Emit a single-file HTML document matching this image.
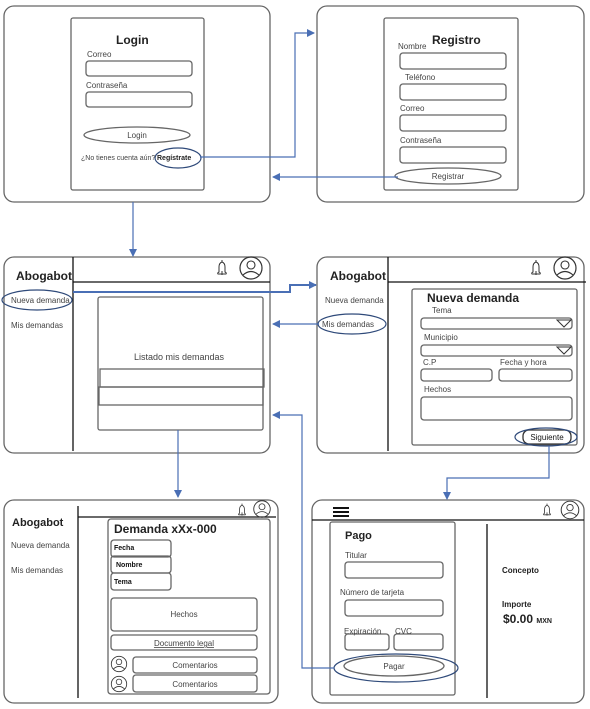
<!DOCTYPE html>
<html><head><meta charset="utf-8"><style>
html,body{margin:0;padding:0;background:#fff;}
svg{display:block;font-family:"Liberation Sans",sans-serif;}
</style></head><body>
<svg width="590" height="709" viewBox="0 0 590 709" xmlns="http://www.w3.org/2000/svg">
<defs>
<marker id="ah" markerWidth="8" markerHeight="8" refX="7" refY="4" orient="auto" markerUnits="userSpaceOnUse"><path d="M0,0 L8,4 L0,8 z" fill="#4a6fb5"/></marker>
<g id="bell"><path d="M-3,4 L-3,-1 Q-3,-5 0,-6 Q3,-5 3,-1 L3,4 Q5,5 4,6 L-4,6 Q-5,5 -3,4 z" fill="none" stroke="#333" stroke-width="1"/><line x1="0" y1="-6" x2="0" y2="-8" stroke="#333"/><line x1="0" y1="3" x2="0" y2="7" stroke="#333"/></g>
<g id="user"><circle r="11" fill="none" stroke="#333" stroke-width="1.2"/><circle cy="-3" r="4" fill="none" stroke="#333" stroke-width="1.1"/><path d="M-8,7 Q0,0 8,7" fill="none" stroke="#333" stroke-width="1.1"/></g>
</defs>
<g fill="none" stroke="#666" stroke-width="1.3">
<!-- panel 1 -->
<rect x="4" y="6" width="266" height="196" rx="10"/>
<rect x="71" y="18" width="133" height="172" rx="2"/>
<rect x="86" y="61" width="106" height="15" rx="3"/>
<rect x="86" y="92" width="106" height="15" rx="3"/>
<ellipse cx="137" cy="135" rx="53" ry="8"/>
<!-- panel 2 -->
<rect x="317" y="6" width="267" height="196" rx="10"/>
<rect x="384" y="18" width="134" height="172" rx="2"/>
<rect x="400" y="53" width="106" height="16" rx="3"/>
<rect x="400" y="84" width="106" height="16" rx="3"/>
<rect x="400" y="115" width="106" height="16" rx="3"/>
<rect x="400" y="147" width="106" height="16" rx="3"/>
<ellipse cx="448" cy="176" rx="53" ry="8"/>
<!-- panel 3 -->
<rect x="4" y="257" width="266" height="196" rx="10"/>
<rect x="98" y="297" width="165" height="133" rx="2"/>
<rect x="100" y="369" width="164" height="18"/>
<rect x="99" y="387" width="164" height="18"/>
<!-- panel 4 -->
<rect x="317" y="257" width="267" height="196" rx="10"/>
<rect x="412" y="289" width="165" height="156" rx="2"/>
<rect x="421" y="318" width="151" height="11" rx="3"/>
<rect x="421" y="345" width="151" height="11" rx="3"/>
<rect x="421" y="369" width="71" height="12" rx="3"/>
<rect x="499" y="369" width="73" height="12" rx="3"/>
<rect x="421" y="397" width="151" height="23" rx="3"/>
<rect x="523" y="430" width="48" height="14" rx="6" stroke="#333"/>
<!-- panel 5 -->
<rect x="4" y="500" width="274" height="203" rx="10"/>
<rect x="108" y="519" width="162" height="175" rx="3"/>
<rect x="111" y="540" width="60" height="17" rx="3"/>
<rect x="111" y="556" width="60" height="17" rx="3"/>
<rect x="111" y="573" width="60" height="17" rx="3"/>
<rect x="111" y="598" width="146" height="33" rx="3"/>
<rect x="111" y="635" width="146" height="15" rx="3"/>
<rect x="133" y="657" width="124" height="16" rx="3"/>
<rect x="133" y="675" width="124" height="17" rx="3"/>
<!-- panel 6 -->
<rect x="312" y="500" width="272" height="203" rx="10"/>
<rect x="330" y="522" width="125" height="173" rx="2"/>
<rect x="345" y="562" width="98" height="16" rx="3"/>
<rect x="345" y="600" width="98" height="16" rx="3"/>
<rect x="345" y="634" width="44" height="16" rx="3"/>
<rect x="394" y="634" width="49" height="16" rx="3"/>
<ellipse cx="394" cy="666" rx="50" ry="10"/>
</g>
<!-- dividers -->
<g stroke="#111" stroke-width="1.3">
<line x1="73" y1="257" x2="73" y2="451"/><line x1="73" y1="282" x2="270" y2="282"/>
<line x1="388" y1="257" x2="388" y2="451"/><line x1="388" y1="282" x2="586" y2="282"/>
<line x1="78" y1="506" x2="78" y2="698"/><line x1="78" y1="517" x2="276" y2="517"/>
<line x1="312" y1="520" x2="584" y2="520"/><line x1="487" y1="524" x2="487" y2="698"/>
<line x1="333" y1="508" x2="349" y2="508" stroke-width="2"/><line x1="333" y1="512" x2="349" y2="512" stroke-width="2"/><line x1="333" y1="516" x2="349" y2="516" stroke-width="2"/>
</g>
<!-- dropdown triangles -->
<path d="M557,320 L571,320 L564,327 z" fill="none" stroke="#333"/>
<path d="M557,347 L571,347 L564,354 z" fill="none" stroke="#333"/>
<!-- icons -->
<use href="#bell" x="222" y="268"/><use href="#user" x="251" y="268"/>
<use href="#bell" x="536" y="268"/><use href="#user" x="565" y="268"/>
<use href="#bell" transform="translate(242,510) scale(0.8)"/><use href="#user" transform="translate(262,509) scale(0.75)"/>
<use href="#bell" transform="translate(547,510) scale(0.8)"/><use href="#user" transform="translate(570,510) scale(0.8)"/>
<use href="#user" transform="translate(119,664) scale(0.7)"/><use href="#user" transform="translate(119,684) scale(0.7)"/>
<!-- blue ellipses -->
<g fill="none" stroke="#2f4a7a" stroke-width="1.2">
<ellipse cx="178" cy="158" rx="23" ry="10"/>
<ellipse cx="37" cy="300" rx="35" ry="10"/>
<ellipse cx="352" cy="324" rx="34" ry="10"/>
<ellipse cx="546" cy="437" rx="31" ry="9"/>
<ellipse cx="396" cy="668" rx="62" ry="14"/>
</g>
<!-- connectors -->
<g fill="none" stroke="#4a6fb5" stroke-width="1.2">
<polyline points="200,157 295,157 295,33 314,33" marker-end="url(#ah)"/>
<polyline points="398,177 273,177" marker-end="url(#ah)"/>
<polyline points="133,202 133,256" marker-end="url(#ah)"/>
<polyline points="73,292 290,292 290,285 316,285" stroke-width="2" marker-end="url(#ah)"/>
<polyline points="319,324 273,324" marker-end="url(#ah)"/>
<polyline points="178,430 178,497" marker-end="url(#ah)"/>
<polyline points="549,446 549,478 447,478 447,499" marker-end="url(#ah)"/>
<polyline points="334,668 302,668 302,415 273,415" marker-end="url(#ah)"/>
</g>
<!-- text -->
<g fill="#444" font-size="8">
<text x="116" y="44" font-size="12" font-weight="bold" fill="#222">Login</text>
<text x="87" y="57">Correo</text>
<text x="86" y="88">Contraseña</text>
<text x="137" y="138" text-anchor="middle">Login</text>
<text x="81" y="160" font-size="7">¿No tienes cuenta aún?</text>
<text x="157" y="160" font-size="7" font-weight="bold" fill="#222">Regístrate</text>
<text x="432" y="44" font-size="12" font-weight="bold" fill="#222">Registro</text>
<text x="398" y="49">Nombre</text>
<text x="405" y="80">Teléfono</text>
<text x="400" y="111">Correo</text>
<text x="400" y="143">Contraseña</text>
<text x="448" y="179" text-anchor="middle">Registrar</text>
<text x="16" y="280" font-size="12" font-weight="bold" fill="#222">Abogabot</text>
<text x="11" y="303">Nueva demanda</text>
<text x="11" y="328">Mis demandas</text>
<text x="179" y="360" text-anchor="middle" font-size="9">Listado mis demandas</text>
<text x="330" y="280" font-size="12" font-weight="bold" fill="#222">Abogabot</text>
<text x="325" y="303">Nueva demanda</text>
<text x="322" y="327">Mis demandas</text>
<text x="427" y="302" font-size="12" font-weight="bold" fill="#222">Nueva demanda</text>
<text x="432" y="313">Tema</text>
<text x="424" y="340">Municipio</text>
<text x="423" y="365">C.P</text>
<text x="500" y="365">Fecha y hora</text>
<text x="424" y="392">Hechos</text>
<text x="547" y="440" text-anchor="middle" fill="#111">Siguiente</text>
<text x="12" y="526" font-size="11" font-weight="bold" fill="#222">Abogabot</text>
<text x="11" y="548">Nueva demanda</text>
<text x="11" y="573">Mis demandas</text>
<text x="114" y="533" font-size="12" font-weight="bold" fill="#222">Demanda xXx-000</text>
<text x="114" y="550" font-size="7" font-weight="bold" fill="#111">Fecha</text>
<text x="116" y="567" font-size="7" font-weight="bold" fill="#111">Nombre</text>
<text x="114" y="584" font-size="7" font-weight="bold" fill="#111">Tema</text>
<text x="184" y="617" text-anchor="middle">Hechos</text>
<text x="184" y="646" text-anchor="middle" text-decoration="underline">Documento legal</text>
<text x="195" y="668" text-anchor="middle">Comentarios</text>
<text x="195" y="687" text-anchor="middle">Comentarios</text>
<text x="345" y="539" font-size="11" font-weight="bold" fill="#222">Pago</text>
<text x="345" y="558">Titular</text>
<text x="340" y="595">Número de tarjeta</text>
<text x="344" y="634">Expiración</text>
<text x="395" y="634">CVC</text>
<text x="394" y="669" text-anchor="middle">Pagar</text>
<text x="502" y="573" font-weight="bold" fill="#222">Concepto</text>
<text x="502" y="607" font-weight="bold" fill="#222">Importe</text>
<text x="503" y="623" font-size="12" font-weight="bold" fill="#222">$0.00 <tspan font-size="7">MXN</tspan></text>
</g>
</svg>
</body></html>
